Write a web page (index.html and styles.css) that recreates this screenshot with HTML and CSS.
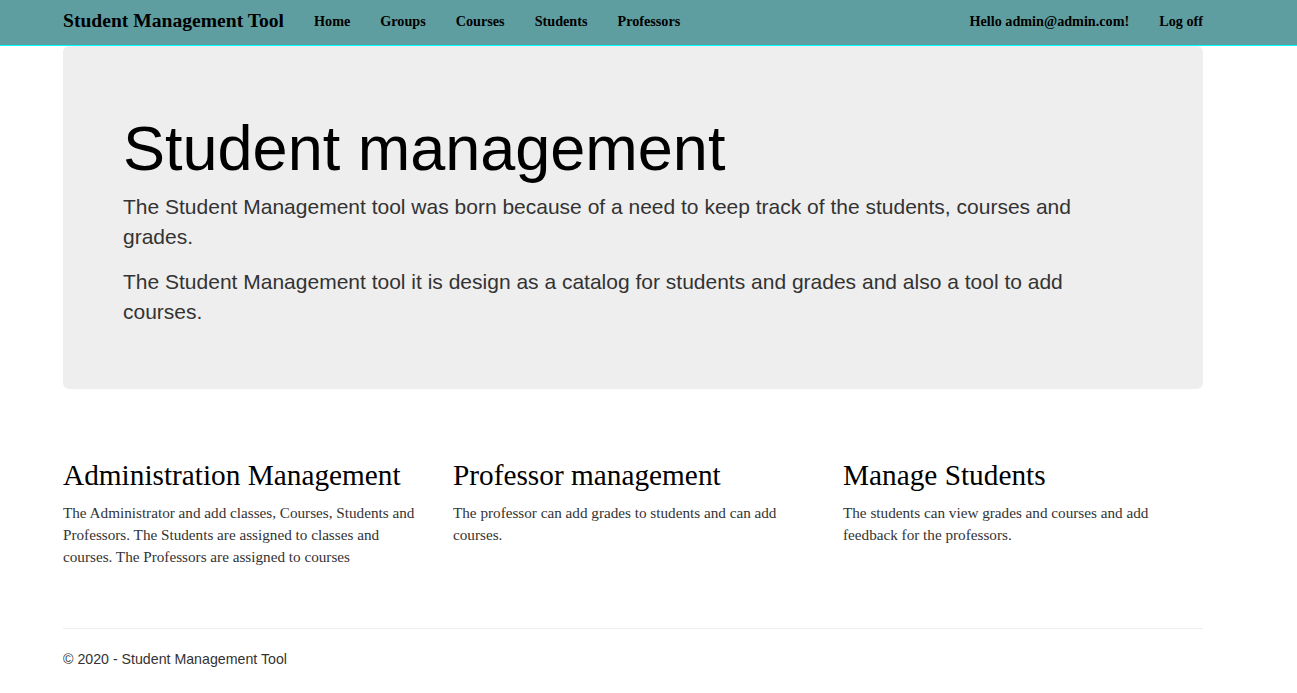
FILE: index.html
```html
<!DOCTYPE html>
<html>
<head>
<meta charset="utf-8">
<title>Home Page - Student Management Tool</title>
<link rel="stylesheet" href="styles.css">
</head>
<body>
<nav class="navbar">
  <div class="nav-inner">
    <div class="nav-left">
      <a class="brand" href="#">Student Management Tool</a>
      <ul class="nav-links">
        <li><a href="#">Home</a></li>
        <li><a href="#">Groups</a></li>
        <li><a href="#">Courses</a></li>
        <li><a href="#">Students</a></li>
        <li><a href="#">Professors</a></li>
      </ul>
    </div>
    <ul class="nav-links nav-right">
      <li><a href="#">Hello admin@admin.com!</a></li>
      <li><a href="#">Log off</a></li>
    </ul>
  </div>
</nav>
<main class="container">
  <section class="jumbotron">
    <h1>Student management</h1>
    <p class="lead">The Student Management tool was born because of a need to keep track of the students, courses and grades.</p>
    <p class="lead">The Student Management tool it is design as a catalog for students and grades and also a tool to add courses.</p>
  </section>
  <div class="row">
    <div class="col">
      <h2>Administration Management</h2>
      <p>The Administrator and add classes, Courses, Students and Professors. The Students are assigned to classes and courses. The Professors are assigned to courses</p>
    </div>
    <div class="col">
      <h2>Professor management</h2>
      <p>The professor can add grades to students and can add courses.</p>
    </div>
    <div class="col">
      <h2>Manage Students</h2>
      <p>The students can view grades and courses and add feedback for the professors.</p>
    </div>
  </div>
  <hr class="rule">
  <footer class="footer">
    <p>&copy; 2020 - Student Management Tool</p>
  </footer>
</main>
</body>
</html>
```
FILE: styles.css
```css
* { box-sizing: border-box; }
html, body { margin: 0; padding: 0; }
body {
  background: #fff;
  color: #333;
  font-family: "Liberation Serif", "Times New Roman", serif;
  font-size: 14px;
  line-height: 22px;
}
a { text-decoration: none; color: #000; }

.navbar {
  background: #5f9ea0;
  border-bottom: 1px solid #00ffff;
  height: 46px;
}
.nav-inner {
  width: 1170px;
  margin-left: 48px;
  display: flex;
  justify-content: space-between;
  align-items: flex-start;
  height: 45px;
}
.nav-left { display: flex; align-items: flex-start; }
.brand {
  font-weight: bold;
  font-size: 19.6px;
  padding: 0 15px;
  line-height: 42px;
  color: #000;
}
.nav-links {
  list-style: none;
  margin: 0;
  padding: 0;
  display: flex;
}
.nav-links a {
  display: block;
  padding: 0 15px;
  line-height: 42px;
  font-weight: bold;
  font-size: 14.2px;
  color: #000;
}

.container {
  width: 1140px;
  margin-left: 63px;
}
.jumbotron {
  background: #eee;
  border-radius: 6px;
  padding: 48px 60px 47px;
  margin-bottom: 30px;
}
.jumbotron h1 {
  font-family: "Liberation Sans", Arial, sans-serif;
  font-weight: 500;
  font-size: 63px;
  line-height: 69px;
  margin: 20px 0 9px;
  color: #000;
}
.lead {
  font-family: "Liberation Sans", Arial, sans-serif;
  font-size: 21px;
  line-height: 30px;
  font-weight: 200;
  color: #333;
  margin: 0 0 15px;
  max-width: 960px;
}

.row {
  display: grid;
  grid-template-columns: repeat(3, 390px);
  margin-top: 70px;
}
.col { padding-right: 30px; }
.col h2 {
  font-family: "Liberation Serif", "Times New Roman", serif;
  font-weight: 500;
  font-size: 29.3px;
  line-height: 33px;
  margin: 0 0 10px;
  color: #000;
}
.col p { margin: 0; color: #333; font-size: 15.2px; }

.rule {
  border: 0;
  border-top: 1px solid #eee;
  margin: 60px 0 20px;
}
.footer p {
  margin: 0;
  font-family: "Liberation Sans", Arial, sans-serif;
  font-size: 14.2px;
  line-height: 20px;
  color: #333;
}
```
